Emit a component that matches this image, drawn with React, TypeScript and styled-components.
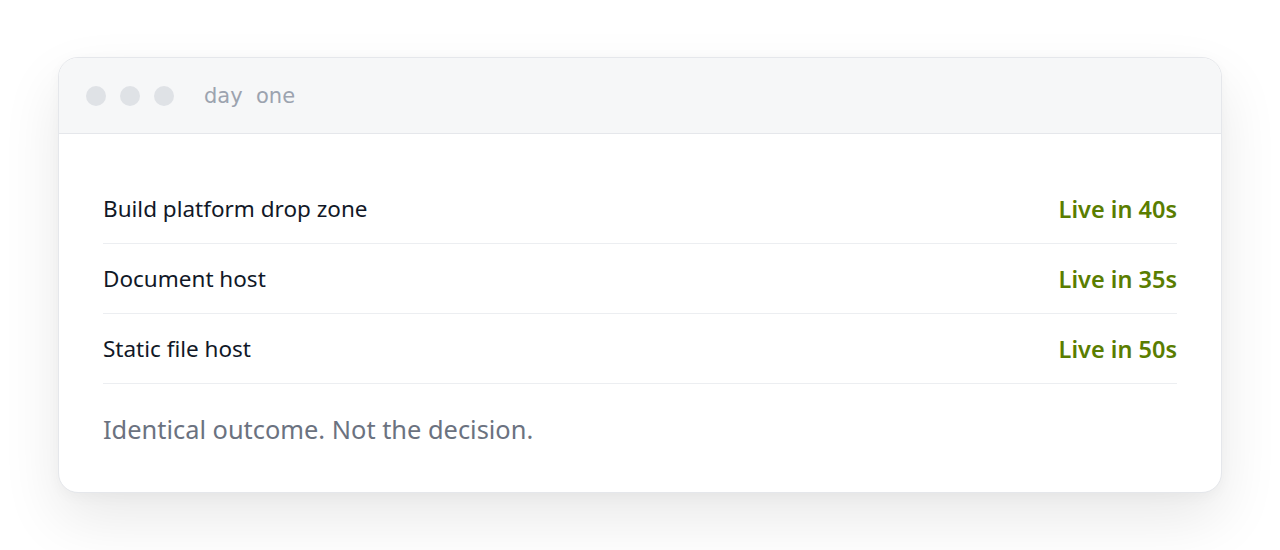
import React from "react";
import styled, { createGlobalStyle } from "styled-components";

const Global = createGlobalStyle`
  html, body { margin: 0; padding: 0; background: #ffffff; }
  body { font-family: "Noto Sans", "Open Sans", sans-serif; }
`;

const Page = styled.div`
  width: 1280px;
  height: 550px;
  box-sizing: border-box;
  padding: 57px 58px 0 58px;
`;

const Card = styled.div`
  width: 1164px;
  box-sizing: border-box;
  border: 1px solid #e5e7eb;
  border-radius: 20px;
  background: #ffffff;
  overflow: hidden;
  box-shadow: 0 26px 60px rgba(0, 0, 0, 0.09), 0 4px 14px rgba(0, 0, 0, 0.03);
`;

const TitleBar = styled.div`
  height: 75px;
  display: flex;
  align-items: center;
  gap: 14px;
  padding: 0 0 0 27px;
  background: #f6f7f8;
  border-bottom: 1px solid #e5e7eb;
`;

const Dot = styled.span`
  width: 20px;
  height: 20px;
  border-radius: 50%;
  background: #dfe2e6;
`;

const Title = styled.span`
  margin-left: 16px;
  font-family: "DejaVu Sans", sans-serif;
  font-size: 21px;
  color: #9ca3af;
  white-space: pre;
`;

const Body = styled.div`
  padding: 40px 44px 46px 44px;
`;

const Row = styled.div`
  display: flex;
  justify-content: space-between;
  align-items: center;
  height: 69px;
  border-bottom: 1px solid #eceef1;
`;

const Name = styled.span`
  font-size: 22.5px;
  color: #111827;
`;

const Status = styled.span`
  font-size: 23.5px;
  font-weight: 600;
  color: #5a7d00;
`;

const Note = styled.p`
  margin: 28px 0 0 0;
  font-size: 25.4px;
  line-height: 34px;
  color: #6b7280;
`;

const rows = [
  { name: "Build platform drop zone", status: "Live in 40s" },
  { name: "Document host", status: "Live in 35s" },
  { name: "Static file host", status: "Live in 50s" },
];

export default function App() {
  return (
    <>
      <Global />
      <Page>
        <Card>
          <TitleBar>
            <Dot />
            <Dot />
            <Dot />
            <Title>{"day  one"}</Title>
          </TitleBar>
          <Body>
            {rows.map((r) => (
              <Row key={r.name}>
                <Name>{r.name}</Name>
                <Status>{r.status}</Status>
              </Row>
            ))}
            <Note>Identical outcome. Not the decision.</Note>
          </Body>
        </Card>
      </Page>
    </>
  );
}
